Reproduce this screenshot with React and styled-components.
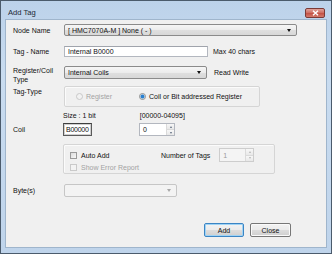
import React from 'react';
import styled, { createGlobalStyle } from 'styled-components';

const Global = createGlobalStyle`
  html, body { margin: 0; padding: 0; background: #fff; }
  * { box-sizing: border-box; }
`;

const Window = styled.div`
  width: 332px;
  height: 254px;
  border: 1px solid #4b5b6c;
  background: linear-gradient(#bcd2ea, #c9dcf0 30%, #bfd4eb);
  padding: 0 4px 5px 4px;
  display: flex;
  flex-direction: column;
  font-family: "Liberation Sans", Arial, sans-serif;
  font-size: 7px;
  color: #111;
`;

const TitleBar = styled.div`
  height: 18px;
  display: flex;
  align-items: flex-start;
  justify-content: space-between;
  padding: 7px 2px 0 3px;
  position: relative;
`;

const Title = styled.span`
  font-size: 7.6px;
  color: #1e2a36;
  line-height: 9px;
`;

const CloseBtn = styled.div`
  position: absolute;
  right: 2px;
  top: 7px;
  width: 20px;
  height: 10px;
  border: 1px solid #7b3a36;
  border-radius: 2px;
  background: linear-gradient(#e0a29a, #cd6a5e 50%, #c24f42 51%, #d47a6c);
  display: flex;
  align-items: center;
  justify-content: center;
`;

const Content = styled.div`
  flex: 1;
  border: 1px solid #9fb5cc;
  background: #f0f0f0;
  padding: 0 0 0 7px;
  display: flex;
  flex-direction: column;
`;

const Row = styled.div`
  display: flex;
  align-items: ${p => p.$align || 'center'};
  margin-top: ${p => p.$mt || 0}px;
  height: ${p => (p.$h ? `${p.$h}px` : 'auto')};
`;

const Label = styled.div`
  width: ${p => p.$w || 51}px;
  flex-shrink: 0;
  line-height: 9px;
  padding-top: ${p => p.$pt || 0}px;
`;

const Note = styled.span`
  margin-left: ${p => p.$ml || 0}px;
  color: ${p => (p.$muted ? '#9a9a9a' : '#111')};
  white-space: nowrap;
  line-height: ${p => p.$lh || 9}px;
`;

const Combo = styled.div`
  width: ${p => p.$w}px;
  height: ${p => p.$h || 13}px;
  border: 1px solid ${p => (p.$disabled ? '#c6c6c6' : '#8b8b8b')};
  border-radius: 2px;
  background: ${p =>
    p.$disabled
      ? '#f3f3f3'
      : 'linear-gradient(#f6f6f6, #ececec 50%, #dfdfdf 51%, #d8d8d8)'};
  display: flex;
  align-items: center;
  justify-content: space-between;
  padding: 0 5px 0 3px;
  white-space: nowrap;
`;

const Arrow = styled.span`
  width: 0;
  height: 0;
  border-left: 2.5px solid transparent;
  border-right: 2.5px solid transparent;
  border-top: 3px solid ${p => (p.$disabled ? '#a8a8a8' : '#111')};
`;

const TextBox = styled.div`
  width: ${p => p.$w}px;
  height: ${p => p.$h || 12}px;
  background: #fff;
  border: 1px solid ${p => (p.$focus ? '#5a5a5a' : '#b3b7bf')};
  border-top-color: ${p => (p.$focus ? '#3e3e3e' : '#a0a4ac')};
  box-shadow: ${p => (p.$focus ? 'inset 0 0 0 1px #cfcfcf' : 'none')};
  display: flex;
  align-items: center;
  padding-left: ${p => (p.$focus ? 2 : 3)}px;
  letter-spacing: ${p => (p.$focus ? '-0.25px' : 'normal')};
  line-height: 9px;
  white-space: nowrap;
  overflow: hidden;
`;

const Spin = styled.div`
  width: ${p => p.$w}px;
  height: ${p => p.$h}px;
  margin-left: ${p => p.$ml || 0}px;
  background: ${p => (p.$disabled ? '#f4f4f4' : '#fff')};
  border: 1px solid ${p => (p.$disabled ? '#cdcdcd' : '#b3b7bf')};
  display: flex;
  align-items: stretch;
  color: ${p => (p.$disabled ? '#9a9a9a' : '#111')};
`;

const SpinValue = styled.div`
  flex: 1;
  display: flex;
  align-items: center;
  padding-left: 3px;
`;

const SpinButtons = styled.div`
  width: 8px;
  display: flex;
  flex-direction: column;
  border-left: 1px solid #dadada;
`;

const SpinBtn = styled.div`
  flex: 1;
  display: flex;
  align-items: center;
  justify-content: center;
  background: linear-gradient(#f7f7f7, #e8e8e8);
  & + & { border-top: 1px solid #dadada; }
  &::after {
    content: '';
    border-left: 1.5px solid transparent;
    border-right: 1.5px solid transparent;
    ${p =>
      p.$up
        ? `border-bottom: 2px solid ${p.$disabled ? '#b5b5b5' : '#5b6a7e'};`
        : `border-top: 2px solid ${p.$disabled ? '#b5b5b5' : '#5b6a7e'};`}
  }
`;

const Group = styled.div`
  width: ${p => p.$w}px;
  height: ${p => p.$h}px;
  border: 1px solid #d5d5d5;
  border-radius: 2px;
  box-shadow: inset 1px 1px 0 #fbfbfb;
  display: flex;
  flex-direction: ${p => p.$dir || 'row'};
  align-items: ${p => (p.$dir === 'column' ? 'stretch' : 'center')};
  padding: ${p => p.$pad || '0'};
`;

const Option = styled.div`
  display: flex;
  align-items: center;
  width: ${p => (p.$w ? `${p.$w}px` : 'auto')};
  color: ${p => (p.$disabled ? '#a3a3a3' : '#111')};
  white-space: nowrap;
  line-height: 9px;
`;

const RadioDot = styled.span`
  width: 7px;
  height: 7px;
  border-radius: 50%;
  margin-right: 3px;
  border: 1px solid ${p => (p.$disabled ? '#c8c8c8' : '#8e8f8f')};
  background: ${p =>
    p.$checked
      ? 'radial-gradient(circle, #2a7fcf 0 1.6px, #bcd8ee 2.2px, #f4f4f4 2.6px)'
      : p.$disabled
      ? '#f2f2f2'
      : '#fff'};
`;

const CheckBox = styled.span`
  width: 7px;
  height: 7px;
  margin-right: 4px;
  border: 1px solid ${p => (p.$disabled ? '#cacaca' : '#9a9a9a')};
  background: ${p => (p.$disabled ? '#f3f3f3' : 'linear-gradient(135deg, #dcdcdc, #f7f7f7)')};
`;

const Button = styled.div`
  width: ${p => p.$w}px;
  height: 14px;
  border: 1px solid ${p => (p.$default ? '#3b85c4' : '#777')};
  border-radius: 2px;
  background: linear-gradient(#f3f3f3, #ebebeb 50%, #dddddd 51%, #cfcfcf);
  box-shadow: ${p => (p.$default ? 'inset 0 0 0 1px #9fd3f5' : 'inset 0 0 0 1px #fafafa')};
  display: flex;
  align-items: center;
  justify-content: center;
  color: #111;
`;

const ButtonBar = styled.div`
  display: flex;
  gap: 6px;
  margin-top: 26px;
  padding-left: 191px;
`;

export default function App() {
  return (
    <>
      <Global />
      <Window>
        <TitleBar>
          <Title>Add Tag</Title>
          <CloseBtn>
            <svg width="7" height="6" viewBox="0 0 7 6">
              <path d="M1 0.8 L6 5.2 M6 0.8 L1 5.2" stroke="#fff" strokeWidth="1.4" />
            </svg>
          </CloseBtn>
        </TitleBar>
        <Content>
          <Row $mt={4} $h={12}>
            <Label>Node Name</Label>
            <Combo $w={233} $h={12}>
              <span>[ HMC7070A-M ] None ( - )</span>
              <Arrow />
            </Combo>
          </Row>

          <Row $mt={10} $h={11}>
            <Label>Tag - Name</Label>
            <TextBox $w={144} $h={11}>Internal B0000</TextBox>
            <Note $ml={5}>Max 40 chars</Note>
          </Row>

          <Row $mt={9} $align="flex-start">
            <Label>
              Register/Coil
              <br />
              Type
            </Label>
            <Combo $w={143} $h={13}>
              <span>Internal Coils</span>
              <Arrow />
            </Combo>
            <Note $ml={7} $lh={13}>Read Write</Note>
          </Row>

          <Row $mt={2} $align="flex-start">
            <Label $pt={1}>Tag-Type</Label>
            <Group $w={196} $h={21} $pad="0 0 0 11px">
              <Option $w={63} $disabled>
                <RadioDot $disabled />
                Register
              </Option>
              <Option>
                <RadioDot $checked />
                Coil or Bit addressed Register
              </Option>
            </Group>
          </Row>

          <Row $mt={4} $h={9}>
            <Label $w={50} />
            <Note>Size : 1 bit</Note>
            <Note $ml={44}>[00000-04095]</Note>
          </Row>

          <Row $mt={3} $h={13}>
            <Label $w={50}>Coil</Label>
            <TextBox $w={29} $h={13} $focus>B00000</TextBox>
            <Spin $w={36} $h={13} $ml={47}>
              <SpinValue>0</SpinValue>
              <SpinButtons>
                <SpinBtn $up />
                <SpinBtn />
              </SpinButtons>
            </Spin>
          </Row>

          <Row $mt={8}>
            <Label $w={50} />
            <Group $w={212} $h={30} $dir="column" $pad="3px 0 0 6px">
              <Row $h={14}>
                <Option $w={91}>
                  <CheckBox />
                  Auto Add
                </Option>
                <Note>Number of Tags</Note>
                <Spin $w={35} $h={14} $ml={9} $disabled>
                  <SpinValue>1</SpinValue>
                  <SpinButtons>
                    <SpinBtn $up $disabled />
                    <SpinBtn $disabled />
                  </SpinButtons>
                </Spin>
              </Row>
              <Row $h={11}>
                <Option $disabled>
                  <CheckBox $disabled />
                  Show Error Report
                </Option>
              </Row>
            </Group>
          </Row>

          <Row $mt={10} $h={13}>
            <Label>Byte(s)</Label>
            <Combo $w={113} $h={13} $disabled>
              <span />
              <Arrow $disabled />
            </Combo>
          </Row>

          <ButtonBar>
            <Button $w={40} $default>Add</Button>
            <Button $w={41}>Close</Button>
          </ButtonBar>
        </Content>
      </Window>
    </>
  );
}
